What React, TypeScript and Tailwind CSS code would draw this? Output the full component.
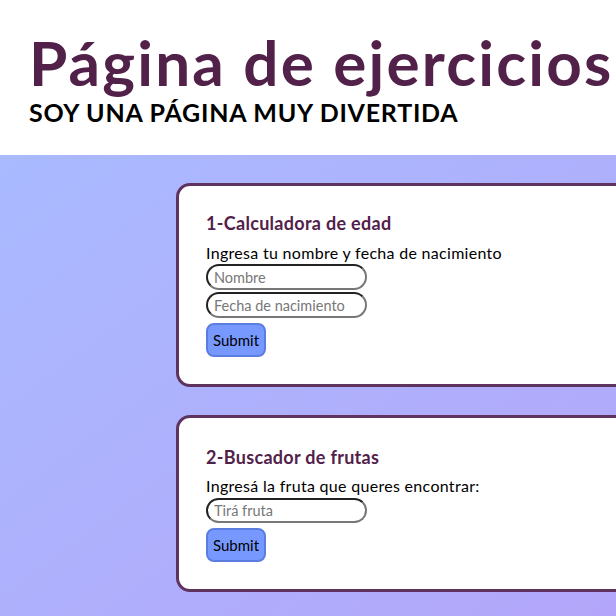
export default function App() {
  return (
    <div className="h-[616px] w-[616px] overflow-hidden bg-white font-['Lato',sans-serif]">
      <header className="h-[155px] pl-[29px] pt-[29px]">
        <h1 className="whitespace-nowrap text-[62px] font-bold leading-[66px] tracking-[2.2px] text-[#52214a]">
          Página de ejercicios
        </h1>
        <h2 className="mt-[3px] whitespace-nowrap text-[25px] font-bold uppercase leading-[28px] tracking-[0.75px] text-black">
          Soy una página muy divertida
        </h2>
      </header>

      <main className="flex h-[461px] flex-col gap-[28px] bg-gradient-to-br from-[#a9baff] to-[#b3a6fa] pl-[176px] pt-[28px]">
        <section className="w-[520px] shrink-0 rounded-[14px] border-[3px] border-[#5e345e] bg-white pb-[27px] pl-[27px] pt-[26px]">
          <h3 className="text-[18px] font-bold leading-[22px] tracking-[0.3px] text-[#52214a]">1-Calculadora de edad</h3>
          <p className="mt-[9px] text-[16px] leading-[20px] tracking-[0.3px] text-black">
            Ingresa tu nombre y fecha de nacimiento
          </p>
          <div className="mt-[1px] flex flex-col gap-[2px]">
            <input
              placeholder="Nombre"
              className="h-[26px] w-[161px] rounded-full border-2 border-b-[#777] border-l-[#222] border-r-[#777] border-t-[#222] px-[6px] text-[14.5px] outline-none placeholder:text-[#777]"
            />
            <input
              placeholder="Fecha de nacimiento"
              className="h-[26px] w-[161px] rounded-full border-2 border-b-[#777] border-l-[#222] border-r-[#777] border-t-[#222] px-[6px] text-[14.5px] outline-none placeholder:text-[#777]"
            />
          </div>
          <button className="mt-[5px] h-[34px] w-[60px] rounded-lg border-2 border-[#5b7de0] bg-[#7799ff] text-[15px] text-black">
            Submit
          </button>
        </section>

        <section className="w-[520px] shrink-0 rounded-[14px] border-[3px] border-[#5e345e] bg-white pb-[27px] pl-[27px] pt-[28px]">
          <h3 className="text-[18px] font-bold leading-[22px] tracking-[0.3px] text-[#52214a]">2-Buscador de frutas</h3>
          <p className="mt-[8px] text-[16px] leading-[20px] tracking-[0.3px] text-black">
            Ingresá la fruta que queres encontrar:
          </p>
          <input
            placeholder="Tirá fruta"
            className="mt-[2px] block h-[25px] w-[161px] rounded-full border-2 border-b-[#777] border-l-[#222] border-r-[#777] border-t-[#222] px-[6px] text-[14.5px] outline-none placeholder:text-[#777]"
          />
          <button className="mt-[5px] h-[34px] w-[60px] rounded-lg border-2 border-[#5b7de0] bg-[#7799ff] text-[15px] text-black">
            Submit
          </button>
        </section>
      </main>
    </div>
  );
}
